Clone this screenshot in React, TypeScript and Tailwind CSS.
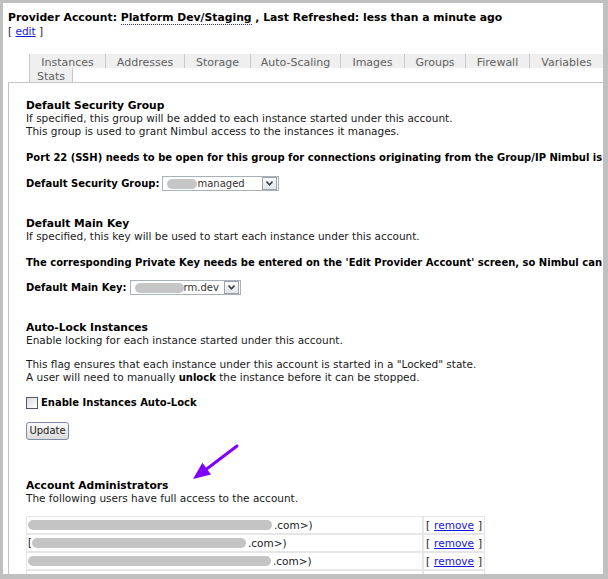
import React from "react";

const tabs: { label: string; w: string }[] = [
  { label: "Instances", w: "w-[77px] border-l" },
  { label: "Addresses", w: "w-[79px]" },
  { label: "Storage", w: "w-[66px]" },
  { label: "Auto-Scaling", w: "w-[90px]" },
  { label: "Images", w: "w-[64px]" },
  { label: "Groups", w: "w-[61px]" },
  { label: "Firewall", w: "w-[64px]" },
  { label: "Variables", w: "w-[74px]" },
  { label: "Stats", w: "w-[44px] border-l" },
];

const rows = [
  { blob: "w-[244px]", lead: "" },
  { blob: "w-[214px]", lead: "[" },
  { blob: "w-[243px]", lead: "" },
  { blob: "w-[230px]", lead: "" },
];

function Chevron() {
  return (
    <span className="flex h-[13px] w-[15px] items-center justify-center border border-[#9aa3ad] bg-gradient-to-b from-[#fbfbfb] to-[#e2e4e8]">
      <svg width="7" height="5" viewBox="0 0 7 5">
        <path d="M0.5 0.5 L3.5 3.8 L6.5 0.5" fill="none" stroke="#3a3f48" strokeWidth="1.6" />
      </svg>
    </span>
  );
}

function Select({ blob, text, w }: { blob: string; text: string; w: string }) {
  return (
    <div className={`flex h-[15px] items-center justify-between border border-[#a9b0b6] bg-white pl-[4px] pr-px ${w}`}>
      <div className="flex items-center">
        <span className={`h-[10px] rounded-full bg-[#c6c6c6] blur-[0.6px] ${blob}`} />
        <span className="text-[10px] leading-[13px] text-[#333]">{text}</span>
      </div>
      <Chevron />
    </div>
  );
}

export default function App() {
  return (
    <div className="relative h-[579px] w-[608px] overflow-hidden bg-[#c0c0c0] pl-[3px] pt-[3px] font-['DejaVu_Sans',sans-serif] text-[#1a1a1a]">
      <div className="h-[571px] w-[600px] overflow-hidden bg-white">
        <div className="pl-[5px] pt-[8px]">
          <div className="whitespace-nowrap text-[10.8px] font-bold leading-[14px] text-black">
            Provider Account:{" "}
            <span className="border-b border-dotted border-[#2a2af0]">Platform Dev/Staging</span> , Last
            Refreshed: less than a minute ago
          </div>
          <div className="text-[10.5px] leading-[12px] text-[#222]">
            [ <span className="text-[#1515e0] underline">edit</span> ]
          </div>
        </div>

        <div className="ml-[26px] mt-[17px] flex w-[575px] flex-wrap">
          {tabs.map((t) => (
            <div
              key={t.label}
              className={`h-[14px] overflow-hidden border-r border-[#c9c9c9] bg-[#efefef] text-center text-[11px] leading-[17px] text-[#616161] ${t.w}`}
            >
              {t.label}
            </div>
          ))}
        </div>

        <div className="ml-[5px] w-[640px] border-l border-t border-[#c4c4c4] pl-[17px] pt-[16px] text-[10.5px] leading-[13px]">
          <div className="text-[10.7px] font-bold text-black">Default Security Group</div>
          <div>If specified, this group will be added to each instance started under this account.</div>
          <div>This group is used to grant Nimbul access to the instances it manages.</div>
          <div className="mt-[13px] whitespace-nowrap text-[10px] font-bold text-black">
            Port 22 (SSH) needs to be open for this group for connections originating from the Group/IP Nimbul is running on.
          </div>
          <div className="mt-[12px] flex items-center gap-[3px]">
            <span className="text-[10px] font-bold text-black">Default Security Group:</span>
            <Select blob="w-[30px]" text="managed" w="w-[117px]" />
          </div>

          <div className="mt-[26px] text-[10.7px] font-bold text-black">Default Main Key</div>
          <div>If specified, this key will be used to start each instance under this account.</div>
          <div className="mt-[13px] whitespace-nowrap text-[10px] font-bold text-black">
            The corresponding Private Key needs be entered on the 'Edit Provider Account' screen, so Nimbul can access the instances.
          </div>
          <div className="mt-[11px] flex items-center gap-[3px]">
            <span className="text-[10px] font-bold text-black">Default Main Key:</span>
            <Select blob="w-[49px]" text="rm.dev" w="w-[111px]" />
          </div>

          <div className="mt-[26px] text-[10.7px] font-bold text-black">Auto-Lock Instances</div>
          <div>Enable locking for each instance started under this account.</div>
          <div className="mt-[11px]">This flag ensures that each instance under this account is started in a "Locked" state.</div>
          <div>
            A user will need to manually <span className="text-[10px] font-bold text-black">unlock</span> the instance before it can
            be stopped.
          </div>
          <div className="mt-[12px] flex h-[13px] items-center gap-[3px]">
            <span className="h-[12px] w-[12px] border border-[#4f5a68] bg-gradient-to-br from-[#dcdcdc] to-white" />
            <span className="text-[10px] font-bold text-black">Enable Instances Auto-Lock</span>
          </div>
          <div className="mt-[13px]">
            <button className="flex h-[18px] w-[43px] items-center justify-center rounded-[3px] border border-[#7d8ba6] bg-gradient-to-b from-[#fbfbfb] to-[#dcdcdc] text-[10px] leading-[12px] text-[#222]">
              Update
            </button>
          </div>

          <div className="mt-[39px] text-[10.7px] font-bold text-black">Account Administrators</div>
          <div>The following users have full access to the account.</div>
          <div className="mt-[11px] w-[459px] border border-[#e6e6e6]">
            {rows.map((r, i) => (
              <div key={i} className="flex h-[18px] border-b-2 border-[#e6e6e6]">
                <div className="flex w-[397px] items-center border-r-2 border-[#e6e6e6] pl-[1px]">
                  {r.lead && <span className="text-[10px] leading-[12px]">{r.lead}</span>}
                  <span className={`h-[10px] rounded-full bg-[#c4c4c4] blur-[0.6px] ${r.blob}`} />
                  <span className="pl-[2px]">.com&gt;)</span>
                </div>
                <div className="flex flex-1 items-center pl-[2px]">
                  [ <span className="mx-[4px] text-[#1515e0] underline">remove</span> ]
                </div>
              </div>
            ))}
          </div>
        </div>
      </div>

      <svg className="pointer-events-none absolute left-0 top-0" width="608" height="579" viewBox="0 0 608 579">
        <line x1="237" y1="446" x2="204" y2="471" stroke="#8000ff" strokeWidth="3" strokeLinecap="round" />
        <polygon points="193,479 202.4,462.8 211,474.4" fill="#8000ff" />
      </svg>
    </div>
  );
}
